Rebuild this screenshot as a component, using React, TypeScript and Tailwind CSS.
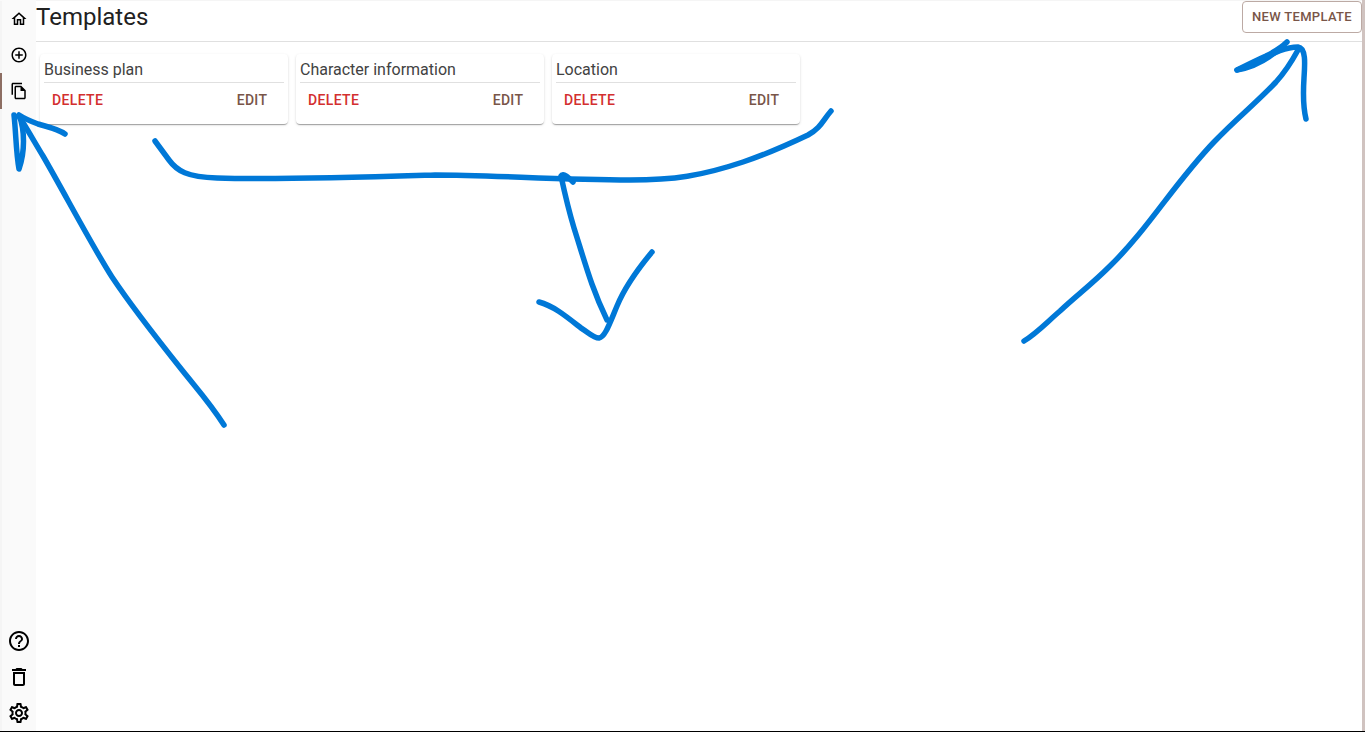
import React from "react";
import {
  MdAddCircleOutline,
  MdDeleteOutline,
  MdHelpOutline,
  MdOutlineFileCopy,
  MdOutlineHome,
  MdOutlineSettings,
} from "react-icons/md";
import type { IconType } from "react-icons";

type NavItem = { label: string; Icon: IconType; active?: boolean };

const mainNav: NavItem[] = [
  { label: "Home", Icon: MdOutlineHome },
  { label: "Create", Icon: MdAddCircleOutline },
  { label: "Templates", Icon: MdOutlineFileCopy, active: true },
];

const footerNav: NavItem[] = [
  { label: "Help", Icon: MdHelpOutline },
  { label: "Trash", Icon: MdDeleteOutline },
  { label: "Settings", Icon: MdOutlineSettings },
];

const templates = ["Business plan", "Character information", "Location"];

function NavList({ items, iconClass }: { items: NavItem[]; iconClass: string }) {
  return (
    <ul>
      {items.map(({ label, Icon, active }) => (
        <li key={label}>
          <a
            href="#"
            aria-label={label}
            aria-current={active ? "page" : undefined}
            className={`flex h-9 items-center justify-center border-l-2 text-black ${
              active ? "border-[#8d6e63]" : "border-[#f5f5f5]"
            }`}
          >
            <Icon className={iconClass} />
          </a>
        </li>
      ))}
    </ul>
  );
}

function TemplateCard({ name }: { name: string }) {
  return (
    <article className="w-62 rounded bg-white px-1 pb-[7px] shadow-[0_2px_1px_-1px_rgba(0,0,0,0.2),0_1px_1px_0_rgba(0,0,0,0.14),0_1px_3px_0_rgba(0,0,0,0.12)]">
      <h2 className="border-b border-[#e0e0e0] pt-1 text-base leading-6 text-[#424242]">{name}</h2>
      <div className="flex justify-between">
        <button className="px-2 py-[5px] text-sm leading-6 font-medium tracking-wide text-[#d32f2f] uppercase">
          Delete
        </button>
        <button className="w-16 px-2 py-[5px] text-center text-sm leading-6 font-medium tracking-wide text-[#795548] uppercase">
          Edit
        </button>
      </div>
    </article>
  );
}

function Annotations() {
  return (
    <svg
      aria-hidden="true"
      className="pointer-events-none absolute top-0 left-0 overflow-visible"
      width="1365"
      height="732"
      fill="none"
      stroke="#0078d7"
      strokeWidth="5.5"
      strokeLinecap="round"
      strokeLinejoin="round"
    >
      <path d="M224 425C210 403 198 390 182 370C158 340 132 307 112 277C91 244 65 194 43 156C34 141 27 129 19 116" />
      <path d="M65 134C58 129 48 127 38 124C30 121 25 119 19 115C25 130 25 152 19 169C16 153 16 133 14 115" />
      <path d="M155 141L169 160C177 171 187 177 217 178C280 180 370 177 435 175C490 175 560 180 630 180C674 180 701 176 743 162C767 154 787 145 808 135C821 128 823 120 831 111" />
      <path d="M573 182C569 178 563 172 561 176C564 190 568 208 574 228C586 266 592 289 607 320" />
      <path d="M539 302C554 306 567 317 581 328C588 332 593 338 599 338C605 337 609 325 617 306C624 289 637 270 652 252" />
      <path d="M1024 341C1037 333 1046 323 1060 311C1077 295 1091 285 1110 266C1149 228 1173 185 1214 142C1237 118 1254 105 1276 82C1286 71 1292 61 1298 50" />
      <path d="M1237 70C1259 63 1278 47 1298 47C1306 48 1305 63 1304 78C1303 94 1303 107 1306 119" />
      <path
        d="M1237 70C1255 67 1272 57 1287 42C1281 48 1274 52 1266 56C1257 60 1247 65 1237 70Z"
        fill="#0078d7"
      />
    </svg>
  );
}

export default function App() {
  return (
    <div className="relative flex min-h-screen border-b border-black bg-white font-[Roboto,sans-serif]">
      <nav
        aria-label="Main"
        className="flex w-9 shrink-0 flex-col justify-between bg-[#fafafa] pt-px"
      >
        <NavList items={mainNav} iconClass="size-[18px]" />
        <div className="grow border-l-2 border-[#f5f5f5]" />
        <NavList items={footerNav} iconClass="size-6" />
      </nav>
      <main className="min-w-0 grow border-t border-[#f5f5f5]">
        <header className="flex h-[41px] items-start justify-between border-b border-[#e0e0e0]">
          <h1 className="text-2xl leading-8 text-[#212121]">Templates</h1>
          <button className="h-8 rounded border border-[#bcaaa4] px-[9px] text-[13px] leading-5 font-medium tracking-wide text-[#795548] uppercase">
            New template
          </button>
        </header>
        <section aria-label="Templates" className="flex flex-wrap gap-2 px-1 pt-3">
          {templates.map((name) => (
            <TemplateCard key={name} name={name} />
          ))}
        </section>
      </main>
      <div className="w-[3px] shrink-0 bg-[#d0c3c0]" />
      <Annotations />
    </div>
  );
}
